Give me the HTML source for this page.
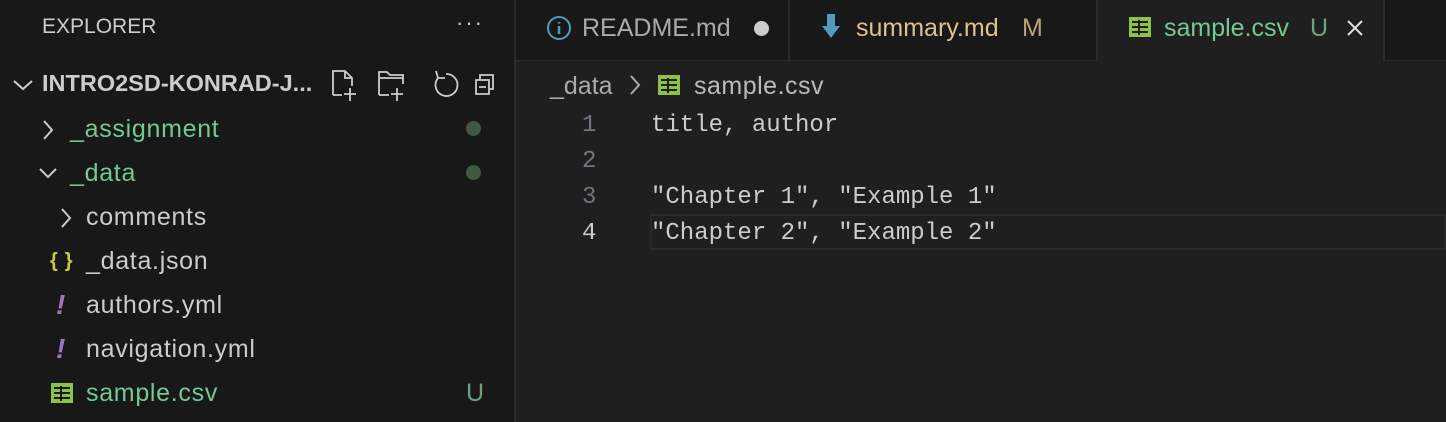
<!DOCTYPE html>
<html><head><meta charset="utf-8"><style>
*{margin:0;padding:0;box-sizing:border-box}
body{width:1446px;height:422px;background:#1f1f1f;font-family:"Liberation Sans",sans-serif;position:relative;overflow:hidden;color:#ccc}
.side{position:absolute;left:0;top:0;width:516px;height:422px;background:#181818;border-right:2px solid #2b2b2b}
.t{position:absolute;white-space:nowrap;font-size:24px}
.row{position:absolute;left:0;width:514px;height:44px;font-size:25px;line-height:44px;letter-spacing:0.7px}
.row span{position:absolute}
.tabs{position:absolute;left:516px;top:0;width:930px;height:61px;background:#181818;border-bottom:1px solid #2b2b2b}
.tab{position:absolute;top:0;height:61px;line-height:56px;font-size:25px;border-right:2px solid #2b2b2b}
.mono{font-family:"Liberation Mono","DejaVu Sans Mono",monospace;font-size:24px}
</style></head><body>
<div class="side">
<div class="t" style="left:42px;top:15px;font-size:21px;color:#ccc">EXPLORER</div>
<div class="t" style="left:456px;top:10px;font-size:22px;color:#ccc;letter-spacing:2px">···</div>
<svg style="position:absolute;left:12px;top:76px" width="24" height="18"><path d="M2 5 L11 13 L20 5" stroke="#ccc" stroke-width="2" fill="none"/></svg>
<div class="t" style="left:42px;top:70px;font-weight:bold;font-size:23.5px;color:#ccc">INTRO2SD-KONRAD-J...</div>
<svg style="position:absolute;left:330px;top:68px" width="180" height="34" fill="none" stroke="#ccc" stroke-width="1.8">
<path d="M3 27V3h12l7 7v8M15 3v7h7M3 27h9M20 20v13M14 26h12"/>
<path d="M49 27V4h8l3 3h13v9M49 10h24M49 27h10M67 20v13M61 26h12"/>
<path d="M108 10a11 11 0 1 0 8-4M106 3l2 7h7"/>
<path d="M146 12h13v14h-13zM150 12V7h13v14h-4M149 19h7"/>
</svg>
<div class="row" style="top:107px;color:#73c991"><svg style="position:absolute;left:40px;top:12px" width="16" height="22"><path d="M4 2 L12 11 L4 20" stroke="#ccc" stroke-width="2" fill="none"/></svg><span style="left:70px">_assignment</span><span style="left:466px;top:14px;width:15px;height:15px;border-radius:50%;background:#3f5a41"></span></div>
<div class="row" style="top:151px;color:#73c991"><svg style="position:absolute;left:38px;top:14px" width="22" height="16"><path d="M2 4 L10 12 L18 4" stroke="#ccc" stroke-width="2" fill="none"/></svg><span style="left:70px">_data</span><span style="left:466px;top:14px;width:15px;height:15px;border-radius:50%;background:#3f5a41"></span></div>
<div class="row" style="top:195px"><svg style="position:absolute;left:58px;top:12px" width="16" height="22"><path d="M4 2 L12 11 L4 20" stroke="#ccc" stroke-width="2" fill="none"/></svg><span style="left:86px">comments</span></div>
<div class="row" style="top:239px"><span style="left:50px;color:#cbcb41;font-size:20px;font-weight:bold">{ }</span><span style="left:86px">_data.json</span></div>
<div class="row" style="top:283px"><span style="left:56px;color:#a074c4;font-weight:bold;font-style:italic;font-size:28px">!</span><span style="left:86px">authors.yml</span></div>
<div class="row" style="top:327px"><span style="left:56px;color:#a074c4;font-weight:bold;font-style:italic;font-size:28px">!</span><span style="left:86px">navigation.yml</span></div>
<div class="row" style="top:371px;color:#73c991"><svg style="position:absolute;left:50px;top:11px" width="24" height="22"><rect x="1" y="1" width="22" height="20" fill="#8dc149"/><path d="M4 6h16M4 11h16M4 16h16M11 4v15" stroke="#181818" stroke-width="2"/></svg><span style="left:86px">sample.csv</span><span style="left:466px;color:#6aa37c">U</span></div>
</div>
<div class="tabs">
<div class="tab" style="left:0;width:274px;color:#aaa"><svg style="position:absolute;left:30px;top:15px" width="26" height="26"><circle cx="13" cy="13" r="11" stroke="#519aba" stroke-width="2" fill="none"/><path d="M13 11v8M13 7v1.5" stroke="#519aba" stroke-width="2.5"/></svg><span style="position:absolute;left:66px">README.md</span><span style="position:absolute;left:238px;top:21px;width:15px;height:15px;border-radius:50%;background:#ccc"></span></div>
<div class="tab" style="left:274px;width:308px;color:#e2c08d"><svg style="position:absolute;left:30px;top:12px" width="22" height="28"><path d="M7 2h8v12h5L11 26 2 14h5z" fill="#519aba"/></svg><span style="position:absolute;left:66px">summary.md</span><span style="position:absolute;left:232px;color:#b9a37a">M</span></div>
<div class="tab" style="left:582px;width:287px;background:#1f1f1f;color:#73c991;height:62px"><svg style="position:absolute;left:30px;top:16px" width="24" height="22"><rect x="1" y="1" width="22" height="20" fill="#8dc149"/><path d="M4 6h16M4 11h16M4 16h16M11 4v15" stroke="#1f1f1f" stroke-width="2"/></svg><span style="position:absolute;left:66px">sample.csv</span><span style="position:absolute;left:212px;color:#6aa37c">U</span><svg style="position:absolute;left:248px;top:19px" width="18" height="18"><path d="M2 2L16 16M16 2L2 16" stroke="#ddd" stroke-width="2"/></svg></div>
</div>
<div class="t" style="left:550px;top:72px;color:#aaa;font-size:25px">_data</div>
<svg style="position:absolute;left:628px;top:74px" width="14" height="22"><path d="M3 2 L11 11 L3 20" stroke="#aaa" stroke-width="2" fill="none"/></svg>
<svg style="position:absolute;left:657px;top:74px" width="24" height="22"><rect x="1" y="1" width="22" height="20" fill="#8dc149"/><path d="M4 6h16M4 11h16M4 16h16M11 4v15" stroke="#1f1f1f" stroke-width="2"/></svg>
<div class="t" style="left:694px;top:72px;color:#bbb;font-size:25px;letter-spacing:0.5px">sample.csv</div>
<div style="position:absolute;left:650px;top:214px;width:796px;height:36px;border:2px solid #282828"></div>
<div class="t mono" style="left:582px;top:112px;color:#6e7681">1</div>
<div class="t mono" style="left:582px;top:148px;color:#6e7681">2</div>
<div class="t mono" style="left:582px;top:184px;color:#6e7681">3</div>
<div class="t mono" style="left:582px;top:220px;color:#ccc">4</div>
<div class="t mono" style="left:651px;top:112px;color:#ccc">title, author</div>
<div class="t mono" style="left:651px;top:184px;color:#ccc">"Chapter 1", "Example 1"</div>
<div class="t mono" style="left:651px;top:220px;color:#ccc">"Chapter 2", "Example 2"</div>
</body></html>
